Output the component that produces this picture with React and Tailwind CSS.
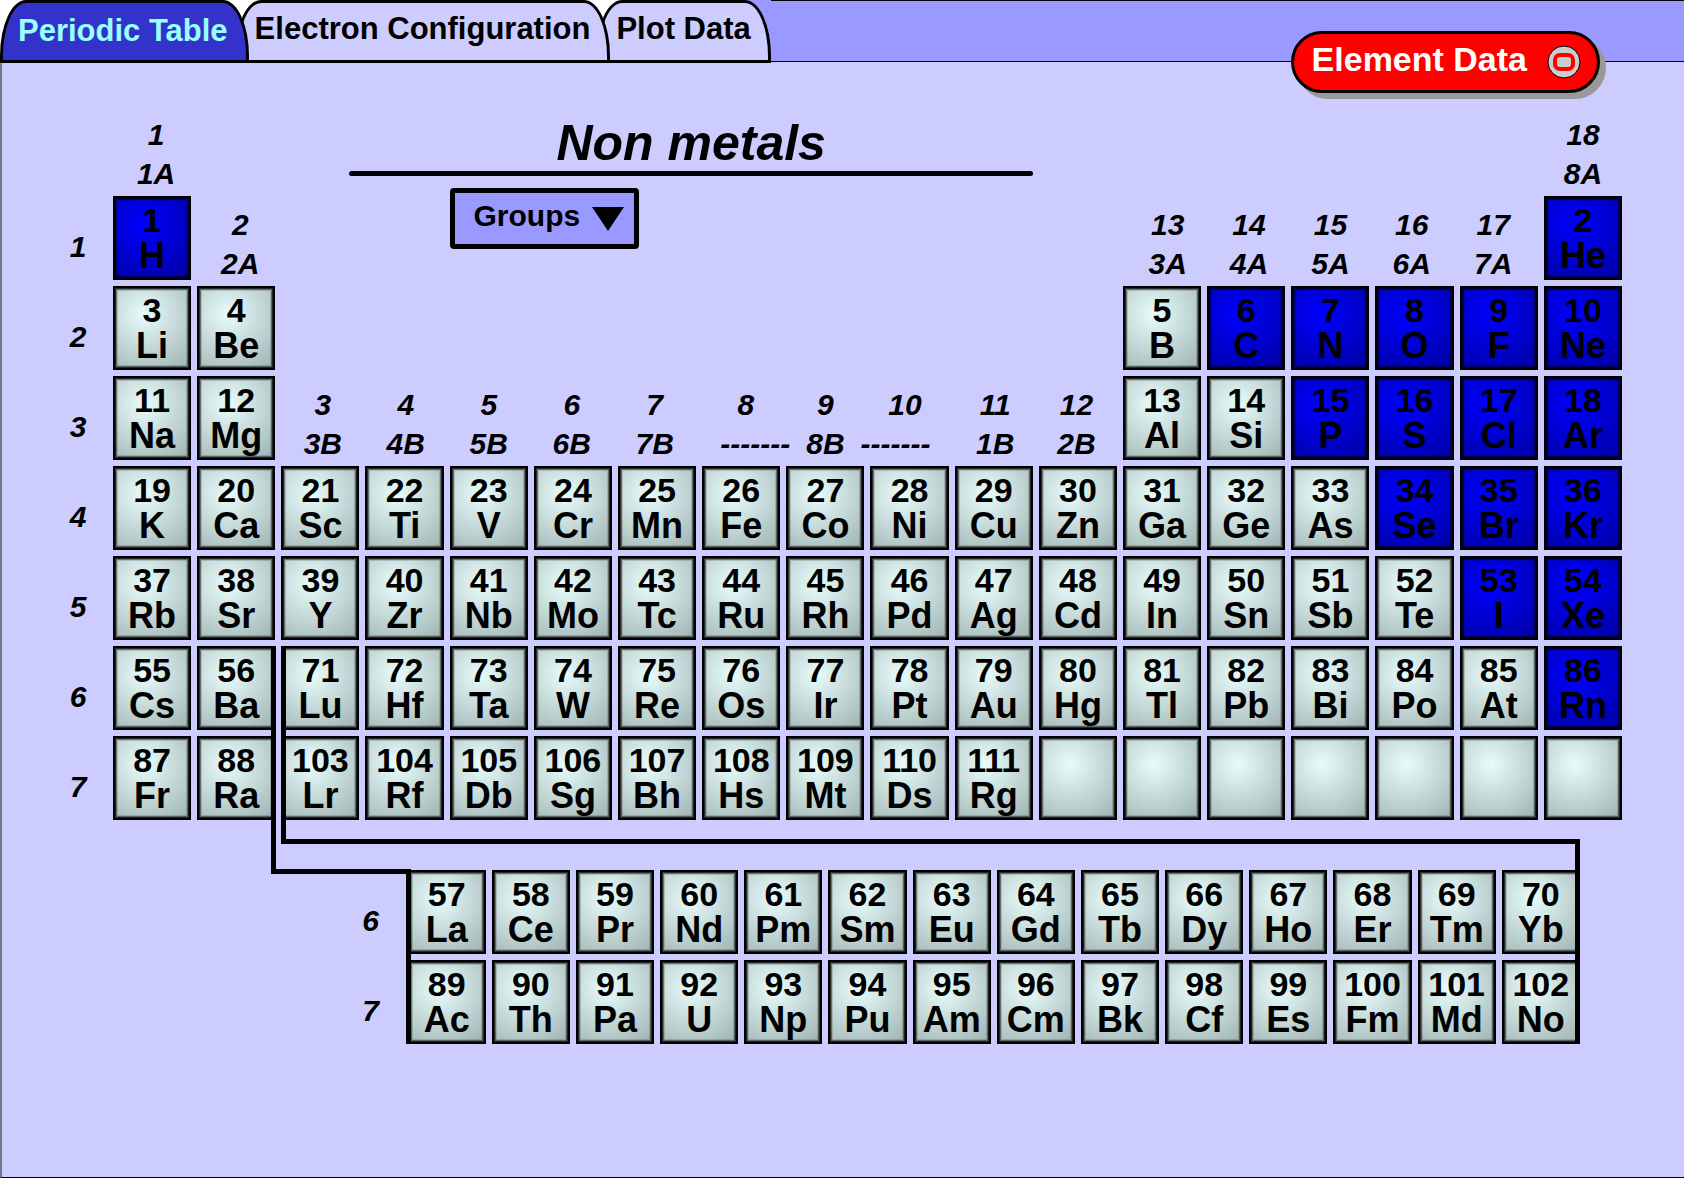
import { useState } from "react";
import clsx from "clsx";

const TABS = ["Periodic Table", "Electron Configuration", "Plot Data"];

// [column, atomic number, symbol] for every period
const PERIODS = [
  [[1, 1, "H"], [18, 2, "He"]],
  [[1, 3, "Li"], [2, 4, "Be"], [13, 5, "B"], [14, 6, "C"], [15, 7, "N"], [16, 8, "O"], [17, 9, "F"], [18, 10, "Ne"]],
  [[1, 11, "Na"], [2, 12, "Mg"], [13, 13, "Al"], [14, 14, "Si"], [15, 15, "P"], [16, 16, "S"], [17, 17, "Cl"], [18, 18, "Ar"]],
  "K Ca Sc Ti V Cr Mn Fe Co Ni Cu Zn Ga Ge As Se Br Kr".split(" ").map((s, i) => [i + 1, 19 + i, s]),
  "Rb Sr Y Zr Nb Mo Tc Ru Rh Pd Ag Cd In Sn Sb Te I Xe".split(" ").map((s, i) => [i + 1, 37 + i, s]),
  "Cs Ba Lu Hf Ta W Re Os Ir Pt Au Hg Tl Pb Bi Po At Rn".split(" ").map((s, i) => [i + 1, i < 2 ? 55 + i : 69 + i, s]),
  [
    ..."Fr Ra Lr Rf Db Sg Bh Hs Mt Ds Rg".split(" ").map((s, i) => [i + 1, i < 2 ? 87 + i : 101 + i, s]),
    ...[12, 13, 14, 15, 16, 17, 18].map((c) => [c]),
  ],
];

const LANTHANIDES = "La Ce Pr Nd Pm Sm Eu Gd Tb Dy Ho Er Tm Yb".split(" ");
const ACTINIDES = "Ac Th Pa U Np Pu Am Cm Bk Cf Es Fm Md No".split(" ");

const NON_METALS = [1, 2, 6, 7, 8, 9, 10, 15, 16, 17, 18, 34, 35, 36, 53, 54, 86];

// group headings, one entry per run of neighbouring columns
const HEADINGS = [
  { row: 1, col: 1, pad: "pl-2", top: ["1"], bottom: ["1A"] },
  { row: 1, col: 18, top: ["18"], bottom: ["8A"] },
  { row: 2, col: 2, pad: "pl-2", top: ["2"], bottom: ["2A"] },
  { row: 2, col: 13, pad: "px-1", top: ["13", "14", "15", "16", "17"], bottom: ["3A", "4A", "5A", "6A", "7A"] },
  { row: 4, col: 3, top: ["3", "4", "5", "6", "7"], bottom: ["3B", "4B", "5B", "6B", "7B"] },
  { row: 4, col: 8, pad: "px-1", joined: true, top: ["8", "9", "10"], bottom: ["-------", "8B", "-------"] },
  { row: 4, col: 11, top: ["11", "12"], bottom: ["1B", "2B"] },
];

// every element is two half tracks wide, track 1 holds the period numbers
const halfTrack = (col) => 2 + (col - 1) * 2;

const Element = ({ number, symbol, row, track }) => {
  const style = { gridRow: row, gridColumn: `${track} / span 2` };
  const highlighted = NON_METALS.includes(number);

  const classes = clsx(
    "flex flex-col items-center justify-start h-[84px] pt-1 border-2 border-black font-bold leading-9",
    "shadow-[inset_0_0_0_1px_rgba(0,0,0,0.6),inset_0_0_0_2px_rgba(0,0,0,0.4),inset_0_0_0_3px_rgba(0,0,0,0.15)]",
    highlighted
      ? "bg-[radial-gradient(circle_at_39%_33%,#0000ff,#0000a0)]"
      : "bg-[radial-gradient(circle_at_39%_33%,#e8fcfb,#9eb2b2)]"
  );

  if (!number) return <div className={classes} style={style} />;

  return (
    <button type="button" className={classes} style={style}>
      <span className="text-[34px] leading-9">{number}</span>
      <span className="text-[36px] leading-9">{symbol}</span>
    </button>
  );
};

const PeriodLabel = ({ value, row, column, pad }) => (
  <div
    className={clsx(
      "flex items-center justify-center h-[84px] pt-[18px] text-[30px] leading-[30px] font-bold italic",
      pad
    )}
    style={{ gridRow: row, gridColumn: column }}
  >
    {value}
  </div>
);

const Heading = ({ row, col, pad, joined, top, bottom }) => (
  <div
    className={clsx(
      "flex flex-col gap-[9px] h-[84px] pt-[14px] text-[30px] leading-[30px] font-bold italic text-center",
      pad
    )}
    style={{ gridRow: row, gridColumn: `${halfTrack(col)} / span ${top.length * 2}` }}
  >
    <div className="flex">
      {top.map((label) => (
        <span key={label} className="flex-1 basis-0">{label}</span>
      ))}
    </div>
    <div className={clsx("flex", joined && "justify-center gap-4")}>
      {bottom.map((label, i) => (
        <span key={i} className={clsx(!joined && "flex-1 basis-0")}>{label}</span>
      ))}
    </div>
  </div>
);

const App = () => {
  const [tab, setTab] = useState(TABS[0]);

  return (
    <div className="flex flex-col min-h-screen bg-[#ccccff] text-black font-['Liberation_Sans',Arial,sans-serif]">

      {/* HEADER */}
      <header className="relative flex items-start justify-between h-[62px] bg-[#9999ff] border-y border-black">
        <nav className="flex -mt-px bg-linear-to-r from-white from-90% to-[#9999ff] to-90%">
          {TABS.map((name, i) => (
            <button
              key={name}
              type="button"
              onClick={() => setTab(name)}
              className={clsx(
                "relative h-[63px] border-3 border-black text-[31px] leading-[31px] font-bold",
                "rounded-[26px_26px_0_0/56px_56px_0_0]",
                i > 0 && "-ml-[14px] px-[17px]",
                i === 0 && "z-30 pl-[15px] pr-[18px]",
                i === 1 && "z-20",
                i === 2 && "z-10",
                name === tab ? "bg-[#3333cc] text-[#99ffff] pb-0.5" : "bg-[#ccccff] pb-1.5"
              )}
            >
              {name}
            </button>
          ))}
        </nav>

        <button
          type="button"
          className="relative z-10 flex items-center gap-5 h-[62px] mt-[30px] mr-[84px] pl-[18px] pr-4 rounded-full border-3 border-black bg-[#ff0000] text-white text-[34px] leading-9 font-bold shadow-[6px_6px_0_#999999]"
        >
          <span className="pb-1.5">Element Data</span>
          <svg width="34" height="34" viewBox="0 0 34 34" aria-hidden="true">
            <circle cx="17" cy="17" r="16" fill="#cccccc" stroke="#000" strokeWidth="1" />
            <rect x="8" y="10" width="18" height="14" rx="5" fill="#cccccc" stroke="#ff0000" strokeWidth="4" />
          </svg>
        </button>
      </header>

      {/* TABLE */}
      <main className="flex-1 pt-11 pl-[47px] pr-[62px] pb-11 border-l-2 border-b border-l-[#77778c] border-b-black">
        <div className="grid gap-[6px] grid-cols-[58px_repeat(36,minmax(0,1fr))] grid-rows-[repeat(8,84px)_38px_repeat(2,84px)]">

          {/* TITLE */}
          <div className="row-start-1 row-span-2 col-start-8 col-span-16 -ml-4 pt-3">
            <h1 className="text-[50px] leading-[50px] font-bold italic text-center">Non metals</h1>
            <div className="h-[5px] mt-[3px] rounded-full bg-black" />
            <div className="relative w-[189px] ml-[101px] mt-3">
              <select
                aria-label="Groups"
                className="appearance-none w-full h-[61px] pl-[18px] pb-1.5 rounded-sm border-5 border-black bg-[#9999ff] text-[30px] leading-[36px] font-bold"
              >
                <option>Groups</option>
              </select>
              <svg className="absolute right-[15px] top-[19px] pointer-events-none" width="32" height="24" viewBox="0 0 32 24" aria-hidden="true">
                <path d="M0 0H32L16 24Z" fill="#000" />
              </svg>
            </div>
          </div>

          {HEADINGS.map((h) => (
            <Heading key={h.col} {...h} />
          ))}

          {/* MAIN PERIODS */}
          {PERIODS.map((period, i) => (
            <PeriodLabel key={i} value={i + 1} row={i + 2} column={1} />
          ))}
          {PERIODS.map((period, i) =>
            period.map(([col, number, symbol]) => (
              <Element key={`${i}-${col}`} number={number} symbol={symbol} row={i + 2} track={halfTrack(col)} />
            ))
          )}

          {/* LANTHANIDES AND ACTINIDES */}
          <PeriodLabel value={6} row={10} column="7 / span 2" pad="pl-4" />
          <PeriodLabel value={7} row={11} column="7 / span 2" pad="pl-4" />
          {LANTHANIDES.map((symbol, i) => (
            <Element key={symbol} number={57 + i} symbol={symbol} row={10} track={9 + i * 2} />
          ))}
          {ACTINIDES.map((symbol, i) => (
            <Element key={symbol} number={89 + i} symbol={symbol} row={11} track={9 + i * 2} />
          ))}

          {/* CONNECTOR LINES */}
          <div className="pointer-events-none row-start-7 row-span-3 col-start-6 col-span-3 -ml-[10px] -mr-[9px] -mb-[10px] border-l-5 border-b-5 border-black" />
          <div className="pointer-events-none row-start-10 row-span-2 col-start-9 col-span-1 -ml-[2px] border-l-5 border-black" />
          <div className="pointer-events-none row-start-7 row-span-2 col-start-6 col-span-31 -mb-[24px] border-l-5 border-b-5 border-black" />
          <div className="pointer-events-none row-start-9 row-span-3 col-start-36 col-span-1 mt-[13px] border-r-5 border-black" />
        </div>
      </main>
    </div>
  );
};

export default App;
